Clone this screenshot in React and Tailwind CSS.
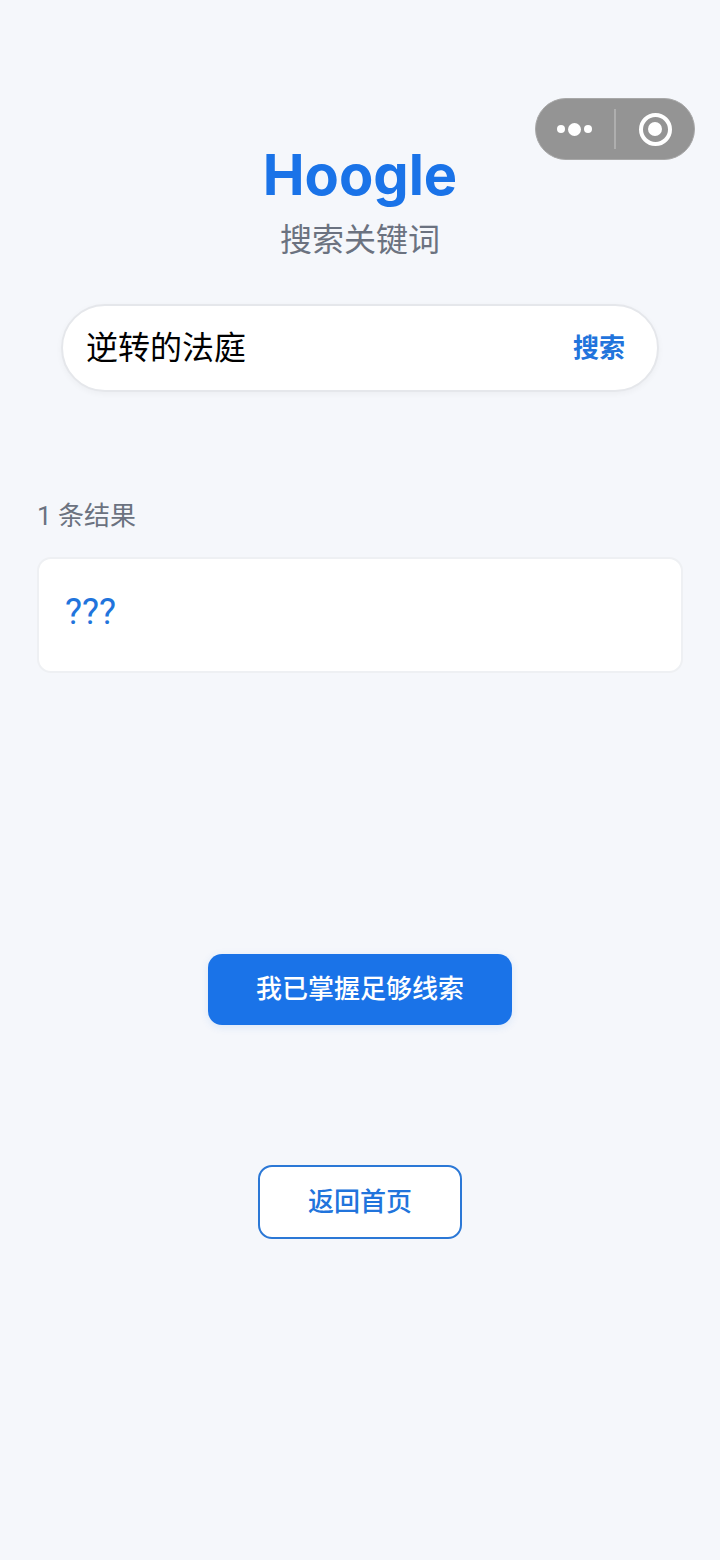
import React from "react";

const Capsule = () => (
	<div className="absolute left-[535px] top-[98px] flex h-[62px] w-[160px] items-center rounded-full border border-[#a8a8a8] bg-[#949494]">
		<div className="flex w-[76px] items-center justify-center gap-[3px]">
			<span className="h-[8px] w-[8px] rounded-full bg-white"></span>
			<span className="h-[13px] w-[13px] rounded-full bg-white"></span>
			<span className="h-[8px] w-[8px] rounded-full bg-white"></span>
		</div>
		<div className="ml-[2px] h-[40px] w-[2px] bg-[#aeaeae]"></div>
		<div className="flex flex-1 items-center justify-center">
			<div className="flex h-[33px] w-[33px] items-center justify-center rounded-full border-[4px] border-white">
				<span className="h-[14px] w-[14px] rounded-full bg-white"></span>
			</div>
		</div>
	</div>
);

export default function App() {
	return (
		<div
			className="relative flex min-h-[1560px] flex-col items-center bg-[#f5f7fb] pt-[140px]"
			style={{ fontFamily: '"Roboto", "Noto Sans CJK SC", sans-serif' }}
		>
			<Capsule />
			<h1 className="font-['Inter'] text-[56px] leading-[70px] font-bold text-[#1a73e8]">Hoogle</h1>
			<p className="mt-[8px] text-[32px] leading-[44px] text-[#6b7280]">搜索关键词</p>

			<div className="mt-[42px] flex h-[88px] w-[598px] items-center justify-between rounded-full border-2 border-[#e5e7eb] bg-white pr-[32px] pl-[23px] shadow-[0_2px_6px_rgba(0,0,0,0.04)]">
				<span className="text-[32px] leading-[44px] text-black">逆转的法庭</span>
				<span className="text-[26px] leading-[36px] font-bold text-[#2174dc]">搜索</span>
			</div>

			<div className="mt-[106px] w-[646px]">
				<p className="text-[26px] leading-[36px] text-[#6b7280]">1 条结果</p>
				<div className="mt-[23px] flex h-[116px] items-center rounded-[14px] border-2 border-[#eef0f3] bg-white pl-[26px]">
					<span className="-translate-y-[3px] text-[36px] leading-[48px] text-[#2174dc]">???</span>
				</div>
			</div>

			<button className="mt-[281px] flex h-[71px] w-[304px] items-center justify-center rounded-[14px] bg-[#1a73e8] text-[26px] font-medium text-white shadow-[0_2px_8px_rgba(26,115,232,0.12)]">
				我已掌握足够线索
			</button>

			<button className="mt-[140px] flex h-[74px] w-[204px] items-center justify-center rounded-[14px] border-2 border-[#2b78d6] bg-white text-[26px] font-medium text-[#2174dc]">
				返回首页
			</button>
		</div>
	);
}
